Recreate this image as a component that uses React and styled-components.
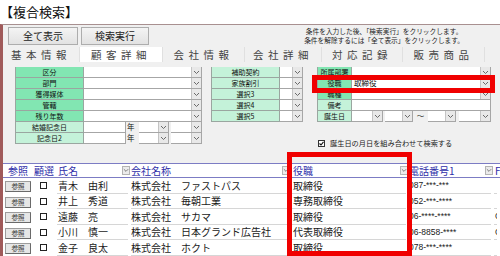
import React from "react";
import styled, { createGlobalStyle } from "styled-components";

const GlobalStyle = createGlobalStyle`
  body {
    margin: 0;
    background: #ffffff;
    font-family: "Noto Sans CJK JP", "Noto Sans", sans-serif;
    color: #111;
  }
`;

const Page = styled.div`
  position: relative;
  width: 500px;
  height: 256px;
  overflow: hidden;
  background: #fff;
`;

const Title = styled.div`
  height: 24px;
  font-size: 13px;
  line-height: 24px;
  color: #111;
`;

const Frame = styled.div`
  height: 232px;
  border-top: 1px solid #a89090;
  border-left: 3px solid #a05a5a;
  background: #f0f0f0;
  box-sizing: border-box;
  display: flex;
  flex-direction: column;
`;

const Toolbar = styled.div`
  display: flex;
  align-items: center;
  padding: 2px 0 0 5px;
  height: 20px;
  box-sizing: border-box;
`;

const Button = styled.div`
  width: ${(p) => p.$w}px;
  height: 18px;
  margin-right: 3px;
  box-sizing: border-box;
  border: 1px solid #adadad;
  background: linear-gradient(#f4f4f4, #e2e2e2);
  font-size: 10px;
  line-height: 16px;
  text-align: center;
  color: #222;
`;

const Notice = styled.div`
  margin-left: auto;
  margin-right: 36px;
  font-size: 6.7px;
  line-height: 9px;
  color: #222;
  text-align: center;
  white-space: nowrap;
`;

const Tabs = styled.div`
  display: flex;
  margin-top: 2px;
  height: 15px;
`;

const Tab = styled.div`
  width: ${(p) => p.$w}px;
  box-sizing: border-box;
  background: ${(p) => (p.$active ? "#ffffff" : "#f0f0f0")};
  border-right: 1px solid #e0e0e0;
  font-size: 10.5px;
  line-height: 15px;
  letter-spacing: 4.5px;
  text-align: center;
  color: #444;
  white-space: nowrap;
`;

const Form = styled.div`
  display: flex;
  align-items: flex-start;
  padding: 5px 0 0 12px;
  height: 91px;
  box-sizing: border-box;
`;

const Column = styled.div`
  display: flex;
  flex-direction: column;
  width: ${(p) => p.$w}px;
  margin-right: ${(p) => p.$mr || 0}px;
`;

const Row = styled.div`
  display: flex;
  align-items: stretch;
  height: 11px;
`;

const Label = styled.div`
  width: ${(p) => p.$w}px;
  flex: none;
  box-sizing: border-box;
  border: 1px solid #9aa6a0;
  border-top-width: 0;
  background: ${(p) => (p.$light ? "#c4f2d9" : "#82e6b2")};
  font-size: 7px;
  line-height: 10px;
  text-align: center;
  color: #111;
  white-space: nowrap;
  overflow: hidden;
`;

const SelectBox = styled.div`
  width: ${(p) => p.$w}px;
  flex: none;
  display: flex;
  box-sizing: border-box;
  border: 1px solid #a6a6a6;
  border-top-width: 0;
  border-left-width: 0;
  background: #fff;
  margin-left: ${(p) => p.$ml || 0}px;
`;

const Value = styled.div`
  flex: 1;
  font-size: 7.5px;
  line-height: 10px;
  padding-left: 2px;
  color: #111;
  overflow: hidden;
  white-space: nowrap;
`;

const Arrow = styled.div`
  width: 9px;
  flex: none;
  display: flex;
  align-items: center;
  justify-content: center;
  background: #e8e8e8;
  border-left: 1px solid #c4c4c4;
`;

const Unit = styled.div`
  width: ${(p) => p.$w}px;
  flex: none;
  font-size: 7.5px;
  line-height: 10px;
  text-align: ${(p) => (p.$center ? "center" : "left")};
  padding-left: ${(p) => (p.$center ? 0 : 1)}px;
  box-sizing: border-box;
`;

const CheckLine = styled.div`
  display: flex;
  align-items: center;
  margin-top: 16px;
  padding-left: 1px;
  font-size: 7.2px;
  line-height: 10px;
  color: #222;
  white-space: nowrap;
`;

const CheckIcon = styled.span`
  width: 7px;
  height: 7px;
  margin-right: 5px;
  box-sizing: border-box;
  border: 1px solid #333;
  background: #fff;
  display: flex;
  align-items: center;
  justify-content: center;
`;

const Table = styled.div`
  display: flex;
  flex-direction: column;
  margin-top: 10px;
  background: #fff;
  flex: 1;
`;

const HeadRow = styled.div`
  display: grid;
  grid-template-columns: 28px 26px 74px 160px 118px 85px 1fr;
  height: 15px;
  box-sizing: border-box;
  border-top: 1px solid #7c7cc4;
  border-bottom: 1px solid #7c7cc4;
  background: #fff;
`;

const HeadCell = styled.div`
  display: flex;
  align-items: center;
  font-size: 10px;
  line-height: 13px;
  color: #2e2ea8;
  padding-left: ${(p) => p.$pl || 0}px;
  white-space: nowrap;
`;

const HeadText = styled.span`
  flex: 1;
`;

const HeadArrow = styled.span`
  width: 8px;
  height: 9px;
  flex: none;
  margin-right: 1px;
  box-sizing: border-box;
  border: 1px solid #b4b4b4;
  background: #ececec;
  display: flex;
  align-items: center;
  justify-content: center;
`;

const BodyRow = styled.div`
  display: grid;
  grid-template-columns: 28px 26px 74px 160px 118px 85px 1fr;
  height: 15.5px;
`;

const Cell = styled.div`
  display: flex;
  align-items: center;
  font-size: ${(p) => (p.$small ? 8.5 : 10)}px;
  font-family: ${(p) =>
    p.$small ? '"Liberation Sans", "Noto Sans CJK JP", sans-serif' : "inherit"};
  color: #1a1a1a;
  padding-left: ${(p) => p.$pl || 0}px;
  margin-right: ${(p) => (p.$line ? 3 : 0)}px;
  border-bottom: ${(p) => (p.$line ? "1px solid #d6d6d6" : "none")};
  white-space: nowrap;
  overflow: hidden;
`;

const RefButton = styled.div`
  width: 26px;
  height: 11px;
  margin-left: 2px;
  margin-top: 2px;
  box-sizing: border-box;
  border: 1px solid #9c9c9c;
  border-right-color: #6a6a6a;
  border-bottom-color: #6a6a6a;
  background: #e6e6e6;
  font-size: 6.5px;
  line-height: 9px;
  text-align: center;
  color: #333;
`;

const Tick = styled.span`
  width: 7px;
  height: 7px;
  margin-left: 9px;
  box-sizing: border-box;
  border: 1px solid #222;
  background: #fff;
`;

const Highlight = styled.div`
  position: absolute;
  left: ${(p) => p.$x}px;
  top: ${(p) => p.$y}px;
  width: ${(p) => p.$w}px;
  height: ${(p) => p.$h}px;
  box-sizing: border-box;
  border: 5px solid #f00000;
  pointer-events: none;
`;

const Chevron = () => (
  <svg width="7" height="5" viewBox="0 0 7 5">
    <path d="M1 1 L3.5 3.5 L6 1" fill="none" stroke="#6a6a6a" strokeWidth="1" />
  </svg>
);

const Select = ({ w, ml, value }) => (
  <SelectBox $w={w} $ml={ml}>
    <Value>{value}</Value>
    <Arrow>
      <Chevron />
    </Arrow>
  </SelectBox>
);

const Field = ({ w }) => (
  <SelectBox $w={w}>
    <Value />
  </SelectBox>
);

const leftRows = ["区分", "部門", "獲得媒体", "管轄", "残り年数"];
const middleRows = ["補助契約", "家族割引", "選択3", "選択4", "選択5"];

const customers = [
  { name: "青木　由利", company: "株式会社　ファストパス", role: "取締役", tel: "087-***-***", f: "" },
  { name: "井上　秀道", company: "株式会社　毎朝工業", role: "専務取締役", tel: "052-***-****", f: "" },
  { name: "遠藤　亮", company: "株式会社　サカマ", role: "取締役", tel: "06-****-****", f: "C" },
  { name: "小川　慎一", company: "株式会社　日本グランド広告社", role: "代表取締役", tel: "06-8858-****", f: "C" },
  { name: "金子　良太", company: "株式会社　ホクト", role: "取締役", tel: "078-***-****", f: "" },
];

const tabs = [
  { label: "基本情報", w: 77 },
  { label: "顧客詳細", w: 83, active: true },
  { label: "会社情報", w: 82 },
  { label: "会社詳細", w: 77 },
  { label: "対応記録", w: 81 },
  { label: "販売商品", w: 82 },
];

export default function App() {
  return (
    <Page>
      <GlobalStyle />
      <Title>【複合検索】</Title>
      <Frame>
        <Toolbar>
          <Button $w={70}>全て表示</Button>
          <Button $w={68}>検索実行</Button>
          <Notice>
            条件を入力した後、「検索実行」をクリックします。
            <br />
            条件を解除するには「全て表示」をクリックします。
          </Notice>
        </Toolbar>

        <Tabs>
          {tabs.map((t) => (
            <Tab key={t.label} $w={t.w} $active={t.active}>
              {t.label}
            </Tab>
          ))}
        </Tabs>

        <Form>
          <Column $w={187} $mr={9}>
            {leftRows.map((l) => (
              <Row key={l}>
                <Label $w={69}>{l}</Label>
                <Select w={118} />
              </Row>
            ))}
            {["結婚記念日", "記念日2"].map((l) => (
              <Row key={l}>
                <Label $w={69} $light>{l}</Label>
                <Field w={42} />
                <Unit $w={13}>年</Unit>
                <Select w={30} />
                <Select w={31} ml={2} />
              </Row>
            ))}
          </Column>

          <Column $w={92} $mr={14}>
            {middleRows.map((l) => (
              <Row key={l}>
                <Label $w={69} $light>{l}</Label>
                <Select w={23} />
              </Row>
            ))}
          </Column>

          <Column $w={174}>
            <Row>
              <Label $w={35}>所属部署</Label>
              <Select w={139} />
            </Row>
            <Row>
              <Label $w={35}>役職</Label>
              <Select w={139} value="取締役" />
            </Row>
            <Row>
              <Label $w={35}>職種</Label>
              <Select w={139} />
            </Row>
            <Row>
              <Label $w={35} $light>備考</Label>
              <Field w={139} />
            </Row>
            <Row>
              <Label $w={35} $light>誕生日</Label>
              <Select w={31} />
              <Select w={28} ml={2} />
              <Unit $w={15} $center>〜</Unit>
              <Select w={28} />
              <Select w={32} ml={3} />
            </Row>
            <CheckLine>
              <CheckIcon>
                <svg width="5" height="5" viewBox="0 0 5 5">
                  <path d="M0.5 2.5 L2 4 L4.5 0.8" fill="none" stroke="#111" strokeWidth="1.1" />
                </svg>
              </CheckIcon>
              誕生日の月日を組み合わせて検索する
            </CheckLine>
          </Column>
        </Form>

        <Table>
          <HeadRow>
            <HeadCell $pl={5}>参照</HeadCell>
            <HeadCell $pl={3}>顧選</HeadCell>
            <HeadCell $pl={1}>
              <HeadText>氏名</HeadText>
              <HeadArrow><Chevron /></HeadArrow>
            </HeadCell>
            <HeadCell>
              <HeadText>会社名称</HeadText>
              <HeadArrow><Chevron /></HeadArrow>
            </HeadCell>
            <HeadCell $pl={2}>
              <HeadText>役職</HeadText>
              <HeadArrow><Chevron /></HeadArrow>
            </HeadCell>
            <HeadCell>
              <HeadText>電話番号1</HeadText>
              <HeadArrow><Chevron /></HeadArrow>
            </HeadCell>
            <HeadCell $pl={1}>F</HeadCell>
          </HeadRow>

          {customers.map((c) => (
            <BodyRow key={c.name}>
              <Cell>
                <RefButton>参照</RefButton>
              </Cell>
              <Cell>
                <Tick />
              </Cell>
              <Cell $line $pl={1}>{c.name}</Cell>
              <Cell $line>{c.company}</Cell>
              <Cell $line $pl={2}>{c.role}</Cell>
              <Cell $line $small>{c.tel}</Cell>
              <Cell $line $small $pl={1}>{c.f}</Cell>
            </BodyRow>
          ))}
        </Table>
      </Frame>

      <Highlight $x={312} $y={75} $w={183} $h={18} />
      <Highlight $x={287} $y={152} $w={125} $h={104} />
    </Page>
  );
}
